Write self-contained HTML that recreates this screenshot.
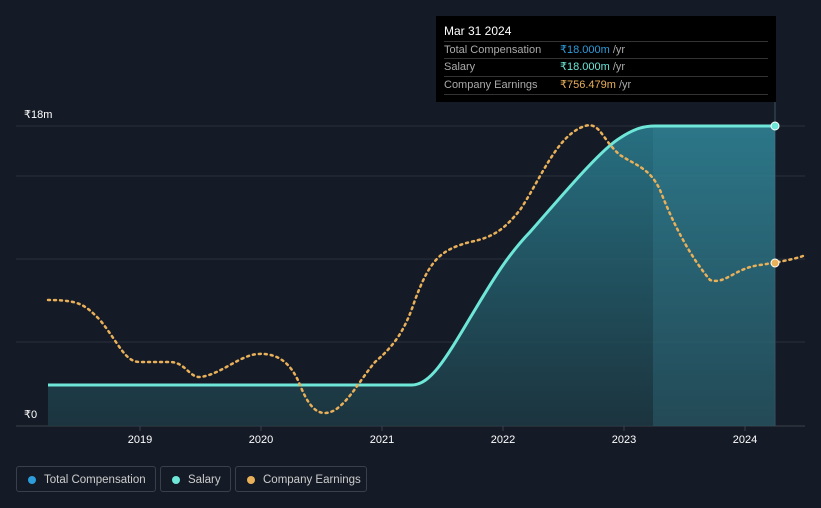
<!DOCTYPE html>
<html><head><style>
body{margin:0;background:#151b26;width:821px;height:508px;overflow:hidden;font-family:"Liberation Sans",sans-serif;position:relative}
.tt{position:absolute;left:436px;top:16px;width:340px;height:86px;background:#000;color:#fff;font-size:11px}
.tt .h{position:absolute;left:8px;top:8px;font-size:12px}
.row{position:absolute;left:8px;width:324px;border-top:1px solid #333;height:17px;line-height:17px;color:#aaa}
.row span{position:absolute;left:116px}
.leg{position:absolute;top:466px;height:26px;border:1px solid #3a404b;border-radius:3px;color:#ccc;font-size:11.5px;line-height:26px;box-sizing:border-box;padding-left:27px}
.leg i{position:absolute;left:11px;top:9px;width:8px;height:8px;border-radius:50%}
</style></head><body>
<svg width="821" height="508" style="position:absolute;left:0;top:0">
<defs><linearGradient id="g" x1="0" y1="0" x2="0" y2="1"><stop offset="0" stop-color="#2a7f92" stop-opacity=".85"/><stop offset="1" stop-color="#1d3a44" stop-opacity=".8"/></linearGradient></defs>
<g stroke="#2c323c" stroke-width="1"><line x1="16" y1="126" x2="805" y2="126"/><line x1="16" y1="176" x2="805" y2="176"/><line x1="16" y1="259" x2="805" y2="259"/><line x1="16" y1="342" x2="805" y2="342"/></g>
<line x1="16" y1="426" x2="805" y2="426" stroke="#3a404b"/>
<line x1="775" y1="102" x2="775" y2="426" stroke="#3a5060"/>
<path d="M48 385 L412 385 C430 385 445 360 470 318 C490 285 505 258 530 232 C560 198 600 150 620 138 C635 128 645 126 655 126 L775 126 L775 426 L48 426Z" fill="url(#g)"/>
<rect x="653" y="126" width="122" height="300" fill="#3b8aa0" opacity=".25"/>
<path d="M48 385 L412 385 C430 385 445 360 470 318 C490 285 505 258 530 232 C560 198 600 150 620 138 C635 128 645 126 655 126 L775 126" fill="none" stroke="#6ee7d8" stroke-width="3"/>
<path d="M48 300 C80 300 85 305 100 320 C120 345 125 362 140 362 L170 362 C185 362 190 378 200 377 C220 375 240 355 258 354 C275 353 290 360 300 385 C310 410 320 418 335 410 C350 400 360 380 375 362 C395 345 405 330 415 300 C430 260 440 250 470 242 C495 237 505 228 520 210 C540 180 555 140 580 128 C600 118 600 138 620 155 C635 165 650 168 660 190 C670 215 685 250 710 280 C725 285 735 268 760 265 C780 262 800 258 805 255" fill="none" stroke="#e9b05a" stroke-width="2.5" stroke-dasharray="2 4" stroke-linecap="round"/>
<circle cx="775" cy="126" r="4" fill="#6ee7d8" stroke="#fff" stroke-width="1"/>
<circle cx="775" cy="263" r="4" fill="#e9b05a" stroke="#fff" stroke-width="1"/>
<g fill="#fff" font-size="11" font-family="Liberation Sans"><text x="24" y="118">₹18m</text><text x="24" y="418">₹0</text>
<g text-anchor="middle"><text x="140" y="443">2019</text><text x="261" y="443">2020</text><text x="382" y="443">2021</text><text x="503" y="443">2022</text><text x="624" y="443">2023</text><text x="745" y="443">2024</text></g></g>
<g stroke="#3a404b"><line x1="140" y1="426" x2="140" y2="431"/><line x1="261" y1="426" x2="261" y2="431"/><line x1="382" y1="426" x2="382" y2="431"/><line x1="503" y1="426" x2="503" y2="431"/><line x1="624" y1="426" x2="624" y2="431"/><line x1="745" y1="426" x2="745" y2="431"/></g>
</svg>
<div class="tt"><div class="h">Mar 31 2024</div>
<div class="row" style="top:25px">Total Compensation<span><b style="font-weight:normal;color:#2d9cdb">₹18.000m</b> /yr</span></div>
<div class="row" style="top:42px">Salary<span><b style="font-weight:normal;color:#6ee7d8">₹18.000m</b> /yr</span></div>
<div class="row" style="top:60px;border-bottom:1px solid #333">Company Earnings<span><b style="font-weight:normal;color:#e9b05a">₹756.479m</b> /yr</span></div></div>
<div class="leg" style="left:16px;width:140px"><i style="background:#2d9cdb"></i>Total Compensation</div>
<div class="leg" style="left:160px;width:71px"><i style="background:#6ee7d8"></i>Salary</div>
<div class="leg" style="left:235px;width:132px"><i style="background:#e9b05a"></i>Company Earnings</div>
</body></html>
